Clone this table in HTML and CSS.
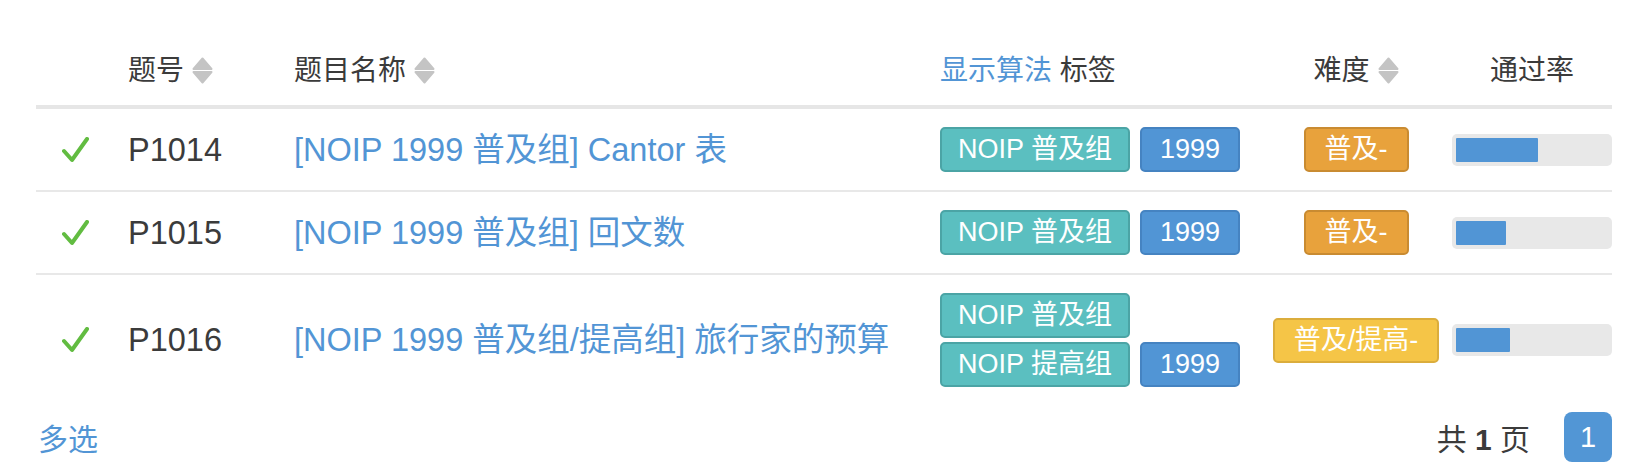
FILE: index.html
```html
<!DOCTYPE html>
<html lang="zh-CN">
<head>
<meta charset="utf-8">
<title>题目列表</title>
<link rel="stylesheet" href="styles.css">
</head>
<body>
<div class="page">
  <table class="problems">
    <colgroup>
      <col class="w-status"><col class="w-pid"><col class="w-title"><col class="w-tags"><col class="w-diff"><col class="w-rate">
    </colgroup>
    <thead>
      <tr>
        <th></th>
        <th><span class="sortable">题号<svg class="sort" viewBox="0 0 21 27"><path d="M10.5 1.5 L19.5 12 H1.5 Z"/><path d="M1.5 15 H19.5 L10.5 25.5 Z"/></svg></span></th>
        <th><span class="sortable">题目名称<svg class="sort" viewBox="0 0 21 27"><path d="M10.5 1.5 L19.5 12 H1.5 Z"/><path d="M1.5 15 H19.5 L10.5 25.5 Z"/></svg></span></th>
        <th><a class="link" href="#">显示算法</a> 标签</th>
        <th class="center"><span class="sortable">难度<svg class="sort" viewBox="0 0 21 27"><path d="M10.5 1.5 L19.5 12 H1.5 Z"/><path d="M1.5 15 H19.5 L10.5 25.5 Z"/></svg></span></th>
        <th class="center">通过率</th>
      </tr>
    </thead>
    <tbody>
      <tr>
        <td><svg class="check" viewBox="0 0 27 26"><polyline points="2,14 10,23 25,2"/></svg></td>
        <td class="pid">P1014</td>
        <td><a class="link title" href="#">[NOIP 1999 普及组] Cantor 表</a></td>
        <td><div class="tags"><span class="tag teal">NOIP 普及组</span><span class="tag blue">1999</span></div></td>
        <td class="center"><span class="badge orange">普及-</span></td>
        <td><div class="rate"><div class="rate-bar" style="width:54%"></div></div></td>
      </tr>
      <tr>
        <td><svg class="check" viewBox="0 0 27 26"><polyline points="2,14 10,23 25,2"/></svg></td>
        <td class="pid">P1015</td>
        <td><a class="link title" href="#">[NOIP 1999 普及组] 回文数</a></td>
        <td><div class="tags"><span class="tag teal">NOIP 普及组</span><span class="tag blue">1999</span></div></td>
        <td class="center"><span class="badge orange">普及-</span></td>
        <td><div class="rate"><div class="rate-bar" style="width:33%"></div></div></td>
      </tr>
      <tr class="last">
        <td><svg class="check" viewBox="0 0 27 26"><polyline points="2,14 10,23 25,2"/></svg></td>
        <td class="pid">P1016</td>
        <td><a class="link title" href="#">[NOIP 1999 普及组/提高组] 旅行家的预算</a></td>
        <td><div class="tags"><span class="tag teal">NOIP 普及组</span><span class="tag teal">NOIP 提高组</span><span class="tag blue">1999</span></div></td>
        <td class="center"><span class="badge yellow">普及/提高-</span></td>
        <td><div class="rate"><div class="rate-bar" style="width:35.5%"></div></div></td>
      </tr>
    </tbody>
  </table>
  <div class="footer">
    <a class="link multi" href="#">多选</a>
    <div class="pager">
      <span class="total">共 <b>1</b> 页</span>
      <span class="page-btn">1</span>
    </div>
  </div>
</div>
</body>
</html>
```

FILE: styles.css
```css
* { box-sizing: border-box; }
html, body { margin: 0; padding: 0; background: #fff; }
body {
  font-family: "Liberation Sans", "Noto Sans CJK SC", sans-serif;
  color: #3b3b3b;
}
.page {
  padding: 36px 14px 0 36px;
}
.problems {
  width: 1576px;
  table-layout: fixed;
  border-collapse: separate;
  border-spacing: 0;
}
.w-status { width: 92px; }
.w-pid { width: 166px; }
.w-title { width: 646px; }
.w-tags { width: 320px; }
.w-diff { width: 192px; }
.w-rate { width: 160px; }

th {
  height: 73px;
  padding: 0;
  text-align: left;
  font-weight: normal;
  font-size: 28px;
  line-height: 36px;
  vertical-align: middle;
  border-bottom: 4px solid #e6e6e6;
  white-space: nowrap;
}
th.center, td.center { text-align: center; }
.sortable {
  display: inline-flex;
  align-items: center;
  gap: 8px;
}
.sort {
  width: 21px;
  height: 27px;
  fill: #c4c4c4;
  stroke: #c4c4c4;
  stroke-width: 2;
  stroke-linejoin: round;
}
.link {
  color: #5295d5;
  text-decoration: none;
}

td {
  padding: 18px 0;
  border-bottom: 2px solid #e8e8e8;
  vertical-align: middle;
  font-size: 32.5px;
  line-height: 38px;
}
tr.last td { border-bottom: none; }

.check {
  display: block;
  width: 27px;
  height: 26px;
  margin-left: 26px;
  fill: none;
  stroke: #62bc41;
  stroke-width: 4;
  stroke-linecap: round;
  stroke-linejoin: round;
}
.pid { color: #3b3b3b; }
.title { white-space: nowrap; }

.tags {
  display: flex;
  flex-wrap: wrap;
  gap: 4px 10px;
}
.tag, .badge {
  display: inline-block;
  height: 45px;
  line-height: 41px;
  font-size: 27px;
  color: #fff;
  border: 2px solid;
  border-radius: 5px;
  white-space: nowrap;
}
.tag { padding: 0 16px; }
.tag.teal { background: #5bbfc0; border-color: #4ba4a5; }
.tag.blue { background: #5195d5; border-color: #4583c1; padding: 0 18px; }
.badge { padding: 0 19px; vertical-align: middle; }
.badge.orange { background: #e8a23c; border-color: #c98b31; }
.badge.yellow { background: #f5c547; border-color: #dbad3c; }

.rate {
  height: 32px;
  padding: 4px;
  background: #e8e8e8;
  border-radius: 5px;
}
.rate-bar {
  height: 24px;
  background: #5195d5;
  border-radius: 1px;
}

.footer {
  margin-top: 7px;
  height: 50px;
  display: flex;
  align-items: center;
  justify-content: space-between;
}
.multi {
  font-size: 30px;
  margin-left: 2px;
}
.pager {
  display: flex;
  align-items: center;
  gap: 34px;
}
.total { font-size: 30px; color: #3b3b3b; }
.total b { font-weight: bold; }
.page-btn {
  width: 48px;
  height: 50px;
  border-radius: 8px;
  background: #5296d5;
  color: #fff;
  font-size: 29px;
  display: flex;
  align-items: center;
  justify-content: center;
}
```
